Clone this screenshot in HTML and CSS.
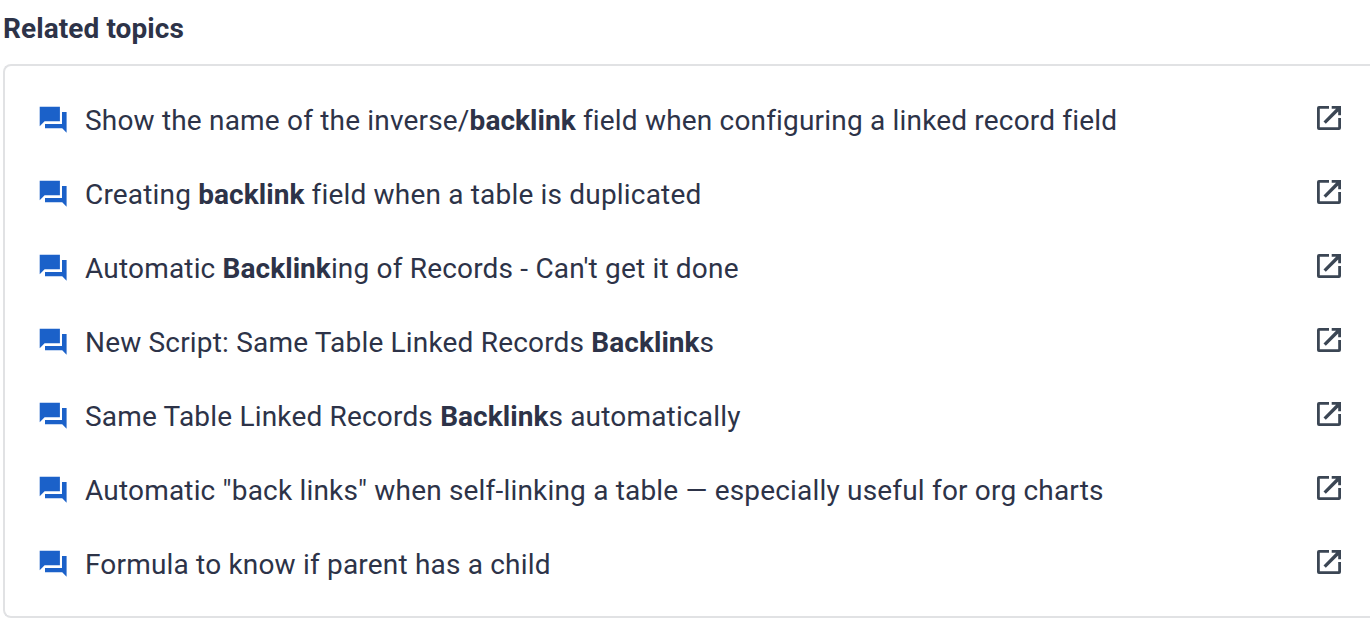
FILE: index.html
```html
<!DOCTYPE html>
<html lang="en">
<head>
<meta charset="utf-8">
<title>Related topics</title>
<link rel="stylesheet" href="styles.css">
</head>
<body>
    <!-- icons shared by every row -->
    <svg class="sprite">
        <symbol id="forum" viewBox="0 0 32 32">
            <path d="M2.7 2.7H22.9V17.2H7.6L2.7 22.3zM25 8H29.6V28.8L25.2 24.2H8V19.9H25z"/>
        </symbol>
        <symbol id="open" viewBox="0 0 32 32">
            <path d="M16 4v2.8H6.8v18.4h18.4V16H28v10a2 2 0 0 1-2 2H6a2 2 0 0 1-2-2V6a2 2 0 0 1 2-2zM18.7 4H28v9.3h-2.8V9.4L12.8 21.8l-2.3-2.3L23 6.8h-4.3z"/>
        </symbol>
    </svg>

    <h2 class="title">Related topics</h2>
    <ul class="topics">
        <li class="topic">
            <svg class="forum"><use href="#forum"/></svg>
            <span class="name">Show the name of the inverse/<b>backlink</b> field when configuring a linked record field</span>
            <svg class="open"><use href="#open"/></svg>
        </li>
        <li class="topic">
            <svg class="forum"><use href="#forum"/></svg>
            <span class="name">Creating <b>backlink</b> field when a table is duplicated</span>
            <svg class="open"><use href="#open"/></svg>
        </li>
        <li class="topic">
            <svg class="forum"><use href="#forum"/></svg>
            <span class="name">Automatic <b>Backlink</b>ing of Records - Can't get it done</span>
            <svg class="open"><use href="#open"/></svg>
        </li>
        <li class="topic">
            <svg class="forum"><use href="#forum"/></svg>
            <span class="name">New Script: Same Table Linked Records <b>Backlink</b>s</span>
            <svg class="open"><use href="#open"/></svg>
        </li>
        <li class="topic">
            <svg class="forum"><use href="#forum"/></svg>
            <span class="name">Same Table Linked Records <b>Backlink</b>s automatically</span>
            <svg class="open"><use href="#open"/></svg>
        </li>
        <li class="topic">
            <svg class="forum"><use href="#forum"/></svg>
            <span class="name">Automatic "back links" when self-linking a table — especially useful for org charts</span>
            <svg class="open"><use href="#open"/></svg>
        </li>
        <li class="topic">
            <svg class="forum"><use href="#forum"/></svg>
            <span class="name">Formula to know if parent has a child</span>
            <svg class="open"><use href="#open"/></svg>
        </li>
    </ul>
</body>
</html>
```

FILE: styles.css
```css
body {
    margin: 0;
    overflow: hidden;
    font-family: Roboto, "Liberation Sans", sans-serif;
    color: #2d3348;
    background-color: #fff;
}
.sprite {
    display: none;
}
.title {
    margin: 0;
    padding: 13px 0 19px 3px;
    font-size: 28px;
    line-height: 32px;
    font-weight: bold;
    letter-spacing: 0.08px;
}
.topics {
    box-sizing: border-box;
    height: 554px;
    margin: 0 0 0 3px;
    padding: 17px 25px 0 32px;
    border: 2px solid #e1e2e4;
    border-right: 0;
    border-radius: 8px 0 0 8px;
    list-style: none;
}
.topic {
    display: flex;
    align-items: center;
    height: 74px;
}
.forum {
    width: 32px;
    height: 32px;
    margin-right: 16px;
    fill: #1b61c9;
}
.name {
    flex: 1;
    font-size: 28px;
    letter-spacing: 0.183px;
    white-space: nowrap;
}
.name b {
    letter-spacing: 0.05px;
}
.open {
    width: 32px;
    height: 32px;
    margin-bottom: 4px;
    fill: #3b4654;
}
```
